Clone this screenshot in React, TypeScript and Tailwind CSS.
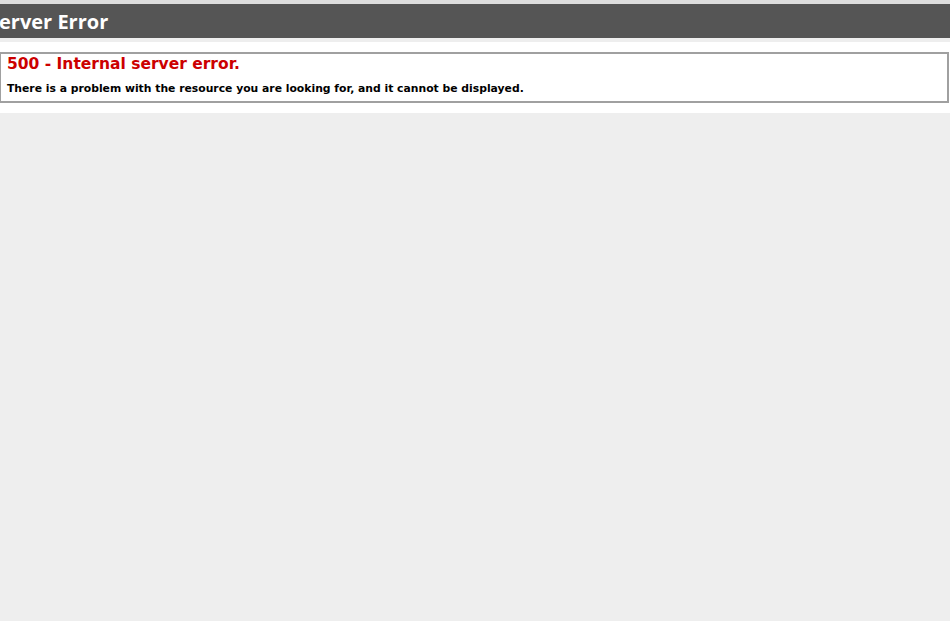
export default function App() {
  return (
    <div className="min-h-[621px] w-full overflow-hidden bg-[#eeeeee] font-['DejaVu_Sans',Verdana,sans-serif]">
      <div className="h-[4px] bg-[#dddddd]" />
      <div className="flex h-[34px] items-center bg-[#555555]">
        <h1 className="-ml-[12px] mt-[1px] whitespace-nowrap font-['Open_Sans',sans-serif] text-[20px] font-bold leading-none text-white">
          Server Error
        </h1>
      </div>
      <div className="mt-[4px] bg-white py-[10px] pr-[1px]">
        <div className="-ml-[1px] border-2 border-[#a0a0a0] bg-white px-[6px] pb-[5px]">
          <h2 className="whitespace-nowrap text-[15.5px] font-bold leading-[20px] text-[#cc0000]">500 - Internal server error.</h2>
          <h3 className="mt-[8px] whitespace-nowrap text-[10.8px] font-bold leading-[14px] text-black">
            There is a problem with the resource you are looking for, and it cannot be displayed.
          </h3>
        </div>
      </div>
    </div>
  );
}
